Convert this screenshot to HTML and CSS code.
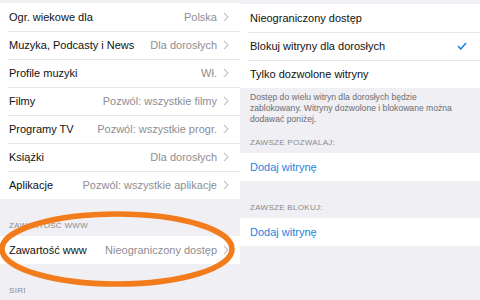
FILE: index.html
```html
<!DOCTYPE html>
<html lang="pl">

<head>
    <meta charset="UTF-8">
    <meta name="viewport" content="width=device-width, initial-scale=1.0">
    <title>Ograniczenia</title>
    <link rel="stylesheet" href="styles.css">
</head>

<body>
    <div class="screens">
        <div class="panel left">
            <ul class="group first">
                <li class="row"><span class="label">Ogr. wiekowe dla</span><span class="value">Polska</span><svg class="chev" viewBox="0 0 6 10"><polyline points="1,1 5,5 1,9"/></svg></li>
                <li class="row"><span class="label">Muzyka, Podcasty i News</span><span class="value">Dla dorosłych</span><svg class="chev" viewBox="0 0 6 10"><polyline points="1,1 5,5 1,9"/></svg></li>
                <li class="row"><span class="label">Profile muzyki</span><span class="value">Wł.</span><svg class="chev" viewBox="0 0 6 10"><polyline points="1,1 5,5 1,9"/></svg></li>
                <li class="row"><span class="label">Filmy</span><span class="value">Pozwól: wszystkie filmy</span><svg class="chev" viewBox="0 0 6 10"><polyline points="1,1 5,5 1,9"/></svg></li>
                <li class="row"><span class="label">Programy TV</span><span class="value">Pozwól: wszystkie progr.</span><svg class="chev" viewBox="0 0 6 10"><polyline points="1,1 5,5 1,9"/></svg></li>
                <li class="row"><span class="label">Książki</span><span class="value">Dla dorosłych</span><svg class="chev" viewBox="0 0 6 10"><polyline points="1,1 5,5 1,9"/></svg></li>
                <li class="row"><span class="label">Aplikacje</span><span class="value">Pozwól: wszystkie aplikacje</span><svg class="chev" viewBox="0 0 6 10"><polyline points="1,1 5,5 1,9"/></svg></li>
            </ul>

            <div class="header">Zawartość www</div>
            <ul class="group">
                <li class="row"><span class="label">Zawartość www</span><span class="value">Nieograniczony dostęp</span><svg class="chev" viewBox="0 0 6 10"><polyline points="1,1 5,5 1,9"/></svg></li>
            </ul>

            <div class="header">Siri</div>

            <!-- hand drawn marker over the www row -->
            <svg class="circle" viewBox="0 0 240 90">
                <ellipse cx="117" cy="45" rx="115" ry="35"/>
            </svg>
        </div>

        <div class="panel right">
            <ul class="group first">
                <li class="row"><span class="label">Nieograniczony dostęp</span></li>
                <li class="row"><span class="label">Blokuj witryny dla dorosłych</span><svg class="check" viewBox="0 0 10 8"><polyline points="1,4 3.8,7 9,1"/></svg></li>
                <li class="row"><span class="label">Tylko dozwolone witryny</span></li>
            </ul>
            <p class="note">Dostęp do wielu witryn dla dorosłych będzie zablokowany. Witryny dozwolone i blokowane można dodawać poniżej.</p>

            <div class="header after-note">Zawsze pozwalaj:</div>
            <ul class="group">
                <li class="row"><span class="link">Dodaj witrynę</span></li>
            </ul>

            <div class="header">Zawsze blokuj:</div>
            <ul class="group">
                <li class="row"><span class="link">Dodaj witrynę</span></li>
            </ul>
        </div>
    </div>
</body>

</html>
```

FILE: styles.css
```css
* {
    box-sizing: border-box;
}

body {
    margin: 0;
    background-color: #efeff4;
    font-family: "Liberation Sans", Arial, sans-serif;
    color: #111;
}

.screens {
    display: flex;
    width: 480px;
    height: 300px;
    overflow: hidden;
}

.panel {
    position: relative;
    width: 240px;
    background-color: #efeff4;
}

.group {
    list-style: none;
    margin: 0;
    padding: 0;
    background-color: #ffffff;
}

.left .group.first {
    margin-top: 3px;
}

.right .group.first {
    margin-top: 4px;
}

.row {
    position: relative;
    display: flex;
    align-items: center;
    height: 28px;
    padding: 0 11px 0 9px;
    font-size: 11px;
}

.right .row {
    padding-left: 10px;
    padding-right: 13px;
}

.row + .row::before {
    content: "";
    position: absolute;
    top: 0;
    left: 8px;
    right: 0;
    border-top: 1px solid #e6e6ea;
}

.label {
    flex: 1;
    white-space: nowrap;
}

.value {
    color: #8e8e93;
    white-space: nowrap;
}

.chev {
    width: 6px;
    height: 10px;
    margin-left: 6px;
}

.chev polyline {
    fill: none;
    stroke: #c7c7cc;
    stroke-width: 1.2;
}

.check {
    width: 10px;
    height: 8px;
}

.check polyline {
    fill: none;
    stroke: #1d84e0;
    stroke-width: 1.6;
}

.link {
    color: #1d84e0;
}

.header {
    padding: 22px 10px 5px 9px;
    font-size: 8px;
    line-height: 10px;
    color: #8a8a8f;
    text-transform: uppercase;
    letter-spacing: 0.3px;
}

.right .header {
    padding-left: 10px;
}

.right .header.after-note {
    padding-top: 13px;
}

.note {
    margin: 0;
    padding: 4px 14px 0 10px;
    font-size: 8.6px;
    line-height: 11px;
    color: #6d6d72;
}

.circle {
    position: absolute;
    left: 0;
    top: 204px;
    width: 240px;
    height: 90px;
}

.circle ellipse {
    fill: none;
    stroke: #f27c1c;
    stroke-width: 5.5;
}
```
